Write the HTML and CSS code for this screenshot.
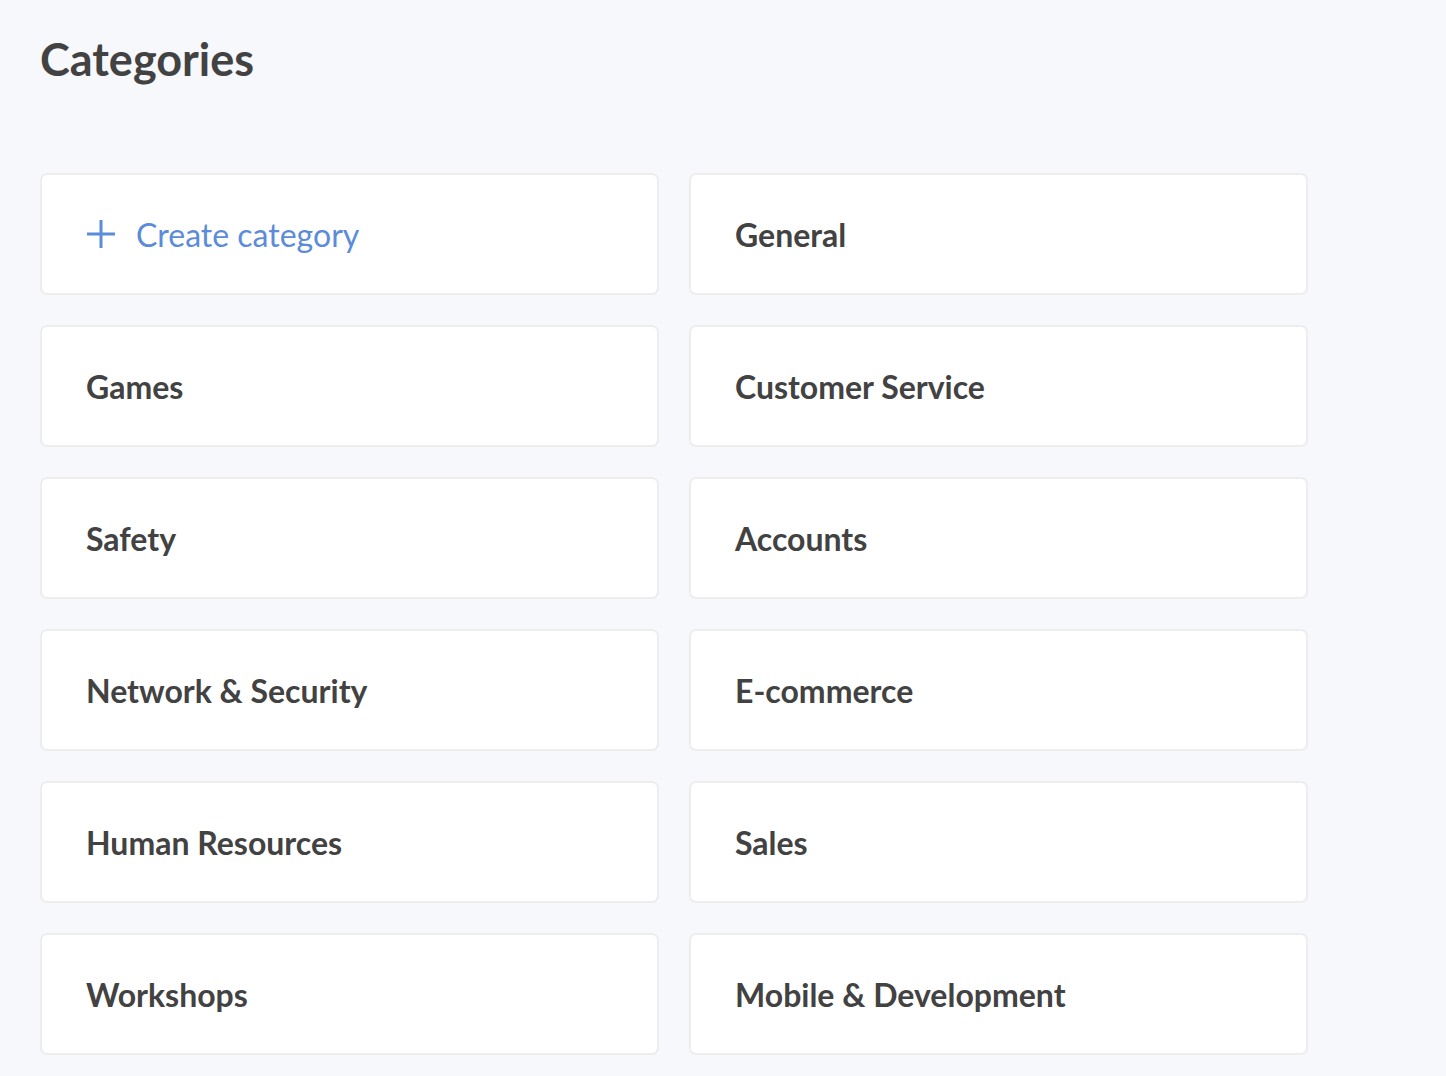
FILE: index.html
```html
<!DOCTYPE html>
<html lang="en">
<head>
  <meta charset="UTF-8" />
  <title>Categories</title>
  <link rel="stylesheet" href="styles.css">
</head>
<body>
  <h1 class="title">Categories</h1>

  <div class="grid">
    <a class="card create" href="#">
      <svg class="plus" width="30" height="30" viewBox="0 0 30 30">
        <path d="M15 1v28M1 15h28" stroke="currentColor" stroke-width="3" fill="none"/>
      </svg>
      <span>Create category</span>
    </a>
    <a class="card" href="#">General</a>
    <a class="card" href="#">Games</a>
    <a class="card" href="#">Customer Service</a>
    <a class="card" href="#">Safety</a>
    <a class="card" href="#">Accounts</a>
    <a class="card" href="#">Network &amp; Security</a>
    <a class="card" href="#">E-commerce</a>
    <a class="card" href="#">Human Resources</a>
    <a class="card" href="#">Sales</a>
    <a class="card" href="#">Workshops</a>
    <a class="card" href="#">Mobile &amp; Development</a>
  </div>
</body>
</html>
```

FILE: styles.css
```css
body {
  margin: 0;
  padding: 0 40px;
  background: #f7f8fc;
  font-family: Lato, "Open Sans", sans-serif;
  color: #424242;
}

.title {
  margin: 0;
  padding-top: 31px;
  font-size: 45px;
  line-height: 56px;
  font-weight: 700;
  height: 173px;
  box-sizing: border-box;
}

.grid {
  display: grid;
  grid-template-columns: 619px 619px;
  gap: 30px;
}

.card {
  display: flex;
  align-items: center;
  height: 122px;
  box-sizing: border-box;
  padding: 0 44px;
  background: #fff;
  border: 2px solid #ededed;
  border-radius: 7px;
  text-decoration: none;
  color: #424242;
  font-size: 32px;
  font-weight: 700;
}

.create {
  color: #5b8bd9;
  font-weight: 400;
}

.plus {
  margin-right: 20px;
}
```
